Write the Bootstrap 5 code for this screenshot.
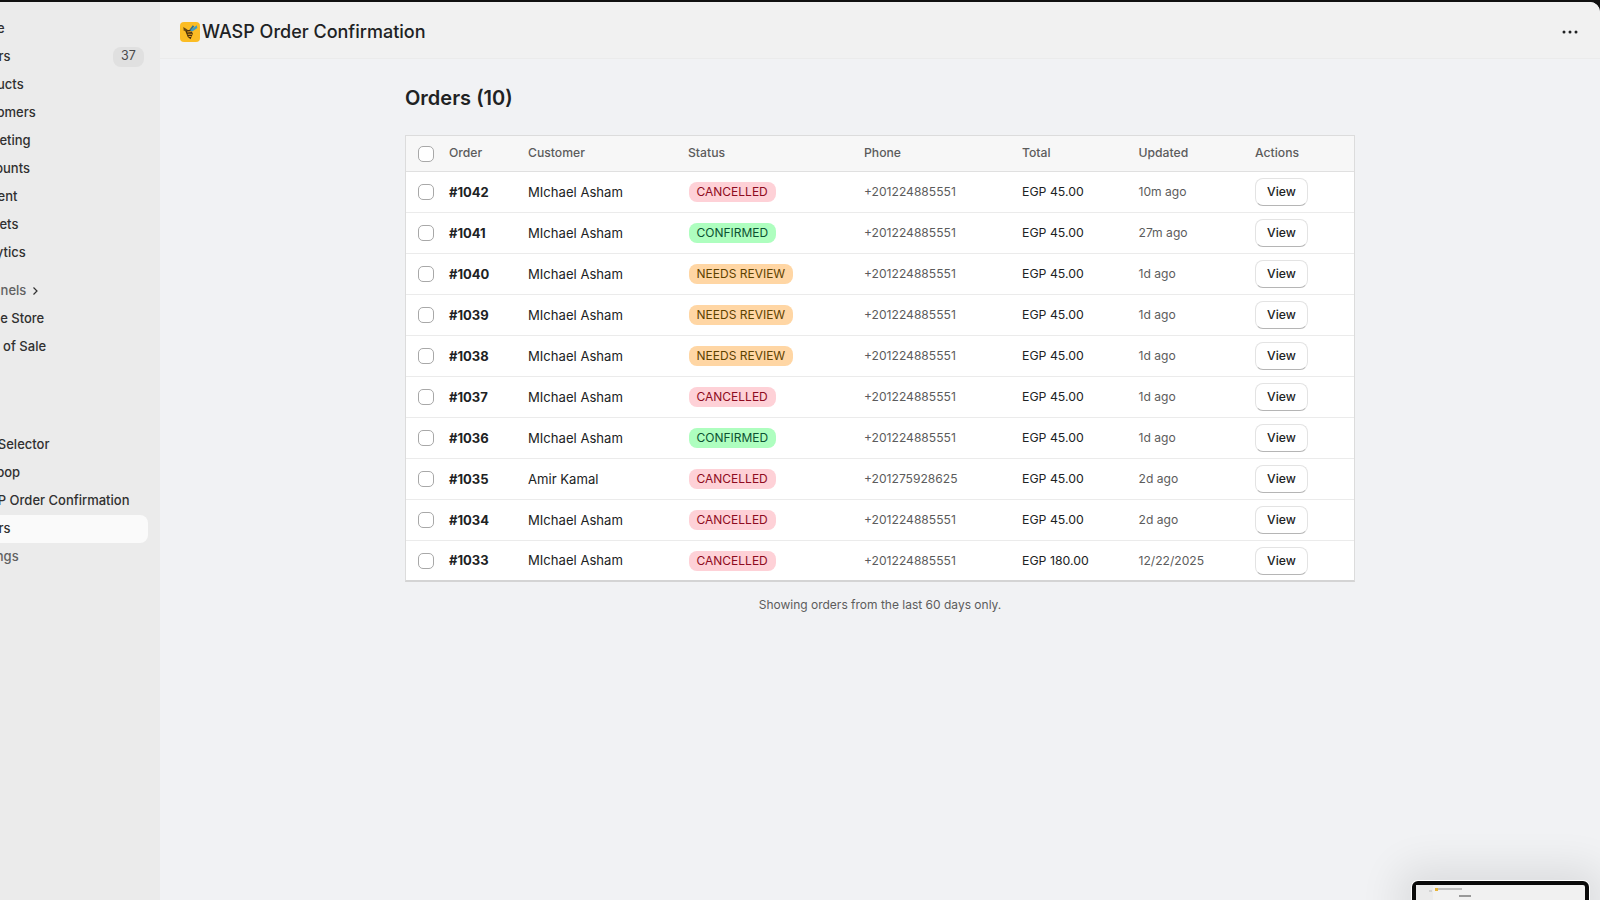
<!DOCTYPE html>
<html lang="en">
<head>
    <meta charset="UTF-8">
    <meta name="viewport" content="width=device-width, initial-scale=1.0">
    <title>WASP Order Confirmation - Orders</title>
    <link href="https://cdn.jsdelivr.net/npm/bootstrap@5.3.2/dist/css/bootstrap.min.css" rel="stylesheet">
    <style>
        html, body { height: 100%; overflow: hidden; }
        body {
            background: #111;
            font-family: Inter, "Liberation Sans", sans-serif;
            color: #202223;
            font-size: 13px;
            padding-top: 2px;
        }
        .app-shell { height: 898px; border-top-right-radius: 10px; overflow: hidden; background: #f1f2f4; }

        /* sidebar, the left part of it is cut off by the screen edge */
        .side-nav { width: 160px; background: #ebebeb; overflow: hidden; flex-shrink: 0; padding-top: 12.5px; }
        .side-inner { margin-left: -32px; width: 180px; }
        .side-link {
            height: 28px;
            padding-left: 0;
            padding-right: 4px;
            font-weight: 500;
            color: #303030;
            white-space: nowrap;
            border-radius: 8px;
        }
        .side-link.is-muted { color: #616161; }
        .side-link.is-active { background: #fafafa; }
        .side-section { margin-top: 10px; font-size: 13px; color: #616161; }
        .side-gap { height: 70px; }
        .count-pill {
            background: #e0e0e0;
            color: #4a4a4a;
            border-radius: 8px;
            width: 31px;
            height: 20px;
            font-size: 12.5px;
            font-weight: 400;
        }

        .top-strip { height: 57px; background: #f1f1f1; border-bottom: 1px solid #ebebeb; padding: 4px 22px 0 20px; }
        .app-logo { width: 20px; height: 20px; border-radius: 4px; background: #fbbc24; }
        .app-title { font-size: 18px; font-weight: 500; margin: 0 0 0 2px; }
        .dots-btn { color: #202223; }

        .orders-wrap { width: 950px; margin-left: 245px; padding-top: 24.5px; }
        .orders-title { font-size: 20px; font-weight: 600; line-height: 28px; margin: 0 0 23.5px 0; }

        .orders-box { background: #fff; border: 1px solid #dcdcdc; border-bottom: 2px solid #d4d4d4; }
        .orders-tbl { margin: 0; table-layout: fixed; width: 100%; font-size: 13.1px; }
        .orders-tbl th, .orders-tbl td {
            padding: 0;
            height: 41px;
            vertical-align: middle;
            border-bottom: 1px solid #ebebeb;
            box-shadow: none;
            background: transparent;
            font-weight: 400;
            color: #202223;
            white-space: nowrap;
        }
        .orders-tbl td.cell-text { padding-top: 1px; }
        .orders-tbl tr:last-child td { border-bottom: 0; height: 39.5px; }
        .orders-tbl thead th {
            height: 35.5px;
            background: #f7f7f7;
            color: #5c5c5c;
            font-size: 12.2px;
            font-weight: 500;
            border-bottom: 1px solid #e0e0e0;
        }
        .col-check { width: 43px; padding-left: 12px !important; }
        .box-tick { width: 16px; height: 16px; border: 1px solid #a8a8a8; border-radius: 5px; background: #fff; display: block; }
        .orders-tbl td.order-no { font-weight: 700; font-size: 13px; }
        .orders-tbl td.txt-soft, .orders-tbl td.txt-phone { color: #5c5c5c; font-size: 12.1px; }
        .orders-tbl td.txt-total { font-size: 12.3px; }

        .state-pill {
            display: inline-block;
            height: 20px;
            line-height: 20px;
            padding: 0 8px;
            border-radius: 8px;
            font-size: 12px;
            font-weight: 400;
            margin-left: .5px;
        }
        .state-red { background: #fed1d7; color: #8e0b21; }
        .state-green { background: #aefebf; color: #0c5132; }
        .state-orange { background: #ffd6a4; color: #5e4200; }

        .view-btn {
            display: inline-block;
            width: 53px;
            height: 28px;
            line-height: 26px;
            padding: 0;
            font-size: 12.2px;
            font-weight: 500;
            color: #202223;
            background: #fff;
            border: 1px solid #e3e3e3;
            border-bottom-color: #b5b5b5;
            border-radius: 8px;
        }

        .orders-note { margin-top: 14px; font-size: 12px; color: #5c5c5c; text-align: center; }

        /* small preview of the screen in the lower corner */
        .mini-frame {
            position: absolute;
            left: 1412px;
            top: 879px;
            width: 177px;
            height: 40px;
            background: #f1f1f1;
            border: 4px solid #0a0a0a;
            border-radius: 6px;
            box-shadow: 0 0 0 1px #fff, 0 0 40px 14px rgba(0,0,0,.09);
        }
        .mini-side { width: 17px; height: 100%; background: #ebebeb; }
        .mini-logo { width: 3px; height: 3px; background: #e8b53a; position: absolute; left: 19px; top: 3px; }
        .mini-head { position: absolute; left: 22px; top: 3px; width: 24px; height: 2px; background: #c0c0c0; }
        .mini-sub { position: absolute; left: 43px; top: 10px; width: 12px; height: 2px; background: #999; }
        .mini-count { position: absolute; left: 13px; top: 5px; width: 3px; height: 2px; background: #d2d2d2; }
    </style>
</head>

<body>
    <div class="app-shell d-flex position-relative">
        <!-- Sidebar -->
        <nav class="side-nav">
            <div class="side-inner" id="sideNav"></div>
        </nav>

        <!-- Main -->
        <div class="flex-grow-1">
            <div class="top-strip d-flex align-items-center justify-content-between">
                <div class="d-flex align-items-center">
                    <span class="app-logo d-flex align-items-center justify-content-center">
                        <svg width="18" height="18" viewBox="0 0 16 16">
                            <path d="M6 6 L2 3.5 L2.5 7 Z" fill="#6b4a12"/>
                            <path d="M3.5 6.5 L9 6 L10.5 9.5 L8.5 14.5 L6 12.5 Z" fill="#4a300c"/>
                            <path d="M5.5 8 L9.5 7.5 M6 10 L9.8 10 M6.8 12 L9.2 12" stroke="#e7a11f" stroke-width="1"/>
                            <path d="M8 6.5 L14 2 L14.5 4.5 L10 7.5 Z" fill="#3d9bc4"/>
                            <path d="M7.5 6 L10.5 2 L11.8 3.2 L8.5 6.5 Z" fill="#2c6f93"/>
                        </svg>
                    </span>
                    <h1 class="app-title">WASP Order Confirmation</h1>
                </div>
                <svg class="dots-btn" width="16" height="4" viewBox="0 0 16 4" fill="currentColor">
                    <circle cx="2" cy="2" r="1.5"/><circle cx="8" cy="2" r="1.5"/><circle cx="14" cy="2" r="1.5"/>
                </svg>
            </div>

            <div class="orders-wrap">
                <h2 class="orders-title">Orders (10)</h2>
                <div class="orders-box">
                    <table class="table orders-tbl">
                        <colgroup>
                            <col style="width:43px"><col style="width:79px"><col style="width:160px"><col style="width:176px">
                            <col style="width:158px"><col style="width:116.5px"><col style="width:116.5px"><col>
                        </colgroup>
                        <thead>
                            <tr>
                                <th class="col-check"><span class="box-tick"></span></th>
                                <th>Order</th><th>Customer</th><th>Status</th><th>Phone</th><th>Total</th><th>Updated</th><th>Actions</th>
                            </tr>
                        </thead>
                        <tbody id="orderRows"></tbody>
                    </table>
                </div>
                <p class="orders-note">Showing orders from the last 60 days only.</p>
            </div>
        </div>

        <div class="mini-frame">
            <div class="mini-side"></div>
            <span class="mini-count"></span><span class="mini-logo"></span><span class="mini-head"></span><span class="mini-sub"></span>
        </div>
    </div>

    <script src="https://cdn.jsdelivr.net/npm/bootstrap@5.3.2/dist/js/bootstrap.bundle.min.js"></script>
    <script>
        const links = [
            ['Home'], ['Orders', 'count'], ['Products'], ['Customers'], ['Marketing'], ['Discounts'], ['Content'], ['Markets'], ['Analytics'],
            ['Channels', 'section'], ['Online Store'], ['Point of Sale'], ['', 'gap'],
            ['Size Selector'], ['Go Loop'], ['WASP Order Confirmation'], ['Orders', 'active'], ['Settings', 'muted']
        ];
        document.getElementById('sideNav').innerHTML = links.map(([name, kind]) => {
            if (kind === 'gap') return '<div class="side-gap"></div>';
            if (kind === 'section') return `<div class="side-link side-section d-flex align-items-center gap-1">${name}
                <svg width="10" height="10" viewBox="0 0 10 10" fill="none" stroke="#303030" stroke-width="1.2"><path d="M3.5 1.5 L7 5 L3.5 8.5"/></svg></div>`;
            const cls = kind === 'active' ? 'is-active' : kind === 'muted' ? 'is-muted' : '';
            const pill = kind === 'count' ? '<span class="count-pill d-flex align-items-center justify-content-center">37</span>' : '';
            return `<div class="side-link ${cls} d-flex align-items-center justify-content-between"><span>${name}</span>${pill}</div>`;
        }).join('');

        const M = 'MIchael Asham', P = '+201224885551';
        const orders = [
            ['#1042', M, 'CANCELLED', P, 'EGP 45.00', '10m ago'],
            ['#1041', M, 'CONFIRMED', P, 'EGP 45.00', '27m ago'],
            ['#1040', M, 'NEEDS REVIEW', P, 'EGP 45.00', '1d ago'],
            ['#1039', M, 'NEEDS REVIEW', P, 'EGP 45.00', '1d ago'],
            ['#1038', M, 'NEEDS REVIEW', P, 'EGP 45.00', '1d ago'],
            ['#1037', M, 'CANCELLED', P, 'EGP 45.00', '1d ago'],
            ['#1036', M, 'CONFIRMED', P, 'EGP 45.00', '1d ago'],
            ['#1035', 'Amir Kamal', 'CANCELLED', '+201275928625', 'EGP 45.00', '2d ago'],
            ['#1034', M, 'CANCELLED', P, 'EGP 45.00', '2d ago'],
            ['#1033', M, 'CANCELLED', P, 'EGP 180.00', '12/22/2025']
        ];
        const pillClass = { CANCELLED: 'state-red', CONFIRMED: 'state-green', 'NEEDS REVIEW': 'state-orange' };
        document.getElementById('orderRows').innerHTML = orders.map(o => `
            <tr>
                <td class="col-check"><span class="box-tick"></span></td>
                <td class="cell-text order-no">${o[0]}</td>
                <td class="cell-text">${o[1]}</td>
                <td><span class="state-pill ${pillClass[o[2]]}">${o[2]}</span></td>
                <td class="cell-text txt-phone">${o[3]}</td>
                <td class="cell-text txt-total">${o[4]}</td>
                <td class="cell-text txt-soft">${o[5]}</td>
                <td><button class="view-btn" type="button">View</button></td>
            </tr>`).join('');
    </script>
</body>
</html>
